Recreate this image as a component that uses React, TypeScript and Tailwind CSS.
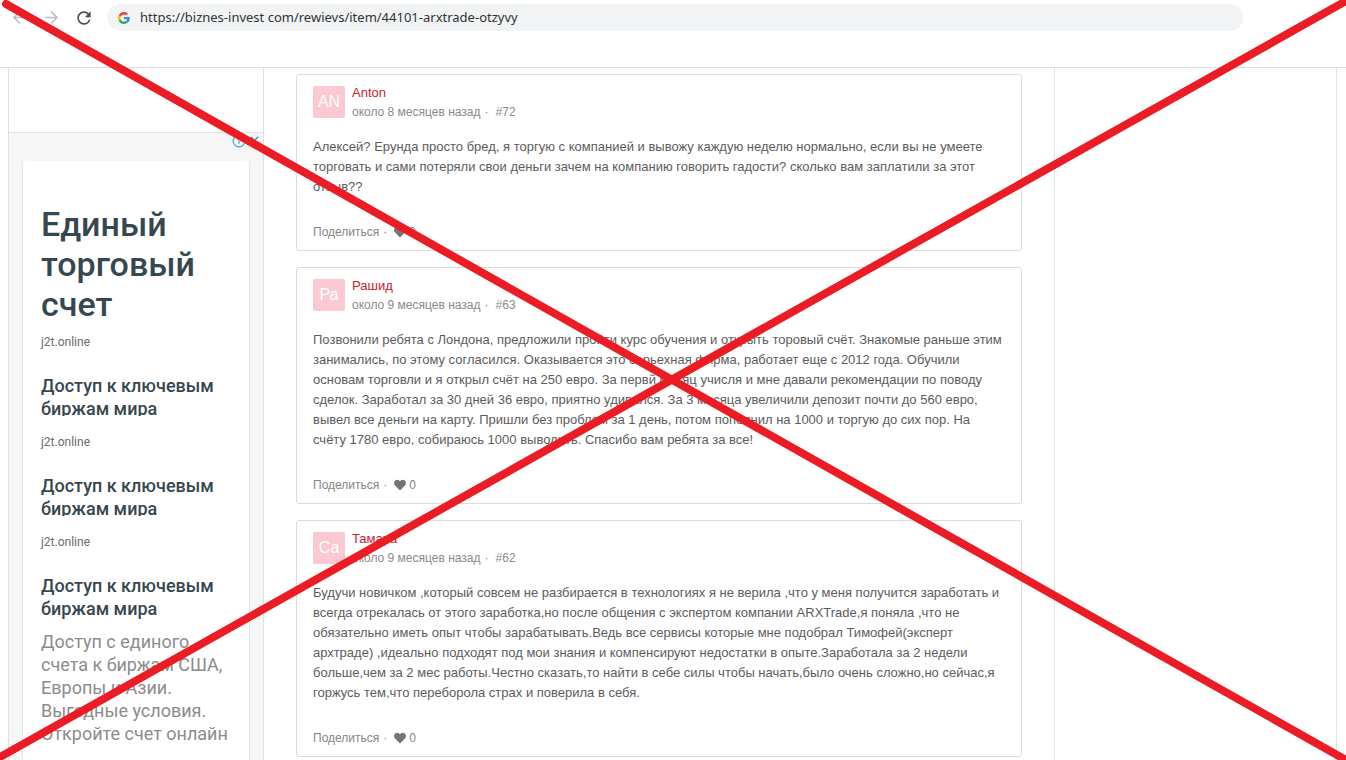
import { ArrowLeft, ArrowRight, Info, X } from 'lucide-react';
import { FaHeart } from 'react-icons/fa';
import { MdRefresh } from 'react-icons/md';

type Comment = {
  id: number;
  initials: string;
  author: string;
  date: string;
  likes: number;
  lines: string[];
};

const comments: Comment[] = [
  {
    id: 72,
    initials: 'AN',
    author: 'Anton',
    date: 'около 8 месяцев назад',
    likes: 0,
    lines: [
      'Алексей? Ерунда просто бред, я торгую с компанией и вывожу каждую неделю нормально, если вы не умеете',
      'торговать и сами потеряли свои деньги зачем на компанию говорить гадости? сколько вам заплатили за этот',
      'отзыв??',
    ],
  },
  {
    id: 63,
    initials: 'Ра',
    author: 'Рашид',
    date: 'около 9 месяцев назад',
    likes: 0,
    lines: [
      'Позвонили ребята с Лондона, предложили пройти курс обучения и открыть торовый счёт. Знакомые раньше этим',
      'занимались, по этому согласился. Оказывается это серьехная фирма, работает еще с 2012 года. Обучили',
      'основам торговли и я открыл счёт на 250 евро. За первй месяц учисля и мне давали рекомендации по поводу',
      'сделок. Заработал за 30 дней 36 евро, приятно удивился. За 3 месяца увеличили депозит почти до 560 евро,',
      'вывел все деньги на карту. Пришли без проблем за 1 день, потом пополнил на 1000 и торгую до сих пор. На',
      'счёту 1780 евро, собираюсь 1000 выводить. Спасибо вам ребята за все!',
    ],
  },
  {
    id: 62,
    initials: 'Са',
    author: 'Тамара',
    date: 'около 9 месяцев назад',
    likes: 0,
    lines: [
      'Будучи новичком ,который совсем не разбирается в технологиях я не верила ,что у меня получится заработать и',
      'всегда отрекалась от этого заработка,но после общения с экспертом компании ARXTrade,я поняла ,что не',
      'обязательно иметь опыт чтобы зарабатывать.Ведь все сервисы которые мне подобрал Тимофей(эксперт',
      'архтраде) ,идеально подходят под мои знания и компенсируют недостатки в опыте.Заработала за 2 недели',
      'больше,чем за 2 мес работы.Честно сказать,то найти в себе силы чтобы начать,было очень сложно,но сейчас,я',
      'горжусь тем,что переборола страх и поверила в себя.',
    ],
  },
];

function GoogleLogo() {
  return (
    <svg viewBox="0 0 48 48" className="size-3" aria-hidden="true">
      <path fill="#EA4335" d="M24 9.5c3.54 0 6.71 1.22 9.21 3.6l6.85-6.85C35.9 2.38 30.47 0 24 0 14.62 0 6.51 5.38 2.56 13.22l7.98 6.19C12.43 13.72 17.74 9.5 24 9.5z" />
      <path fill="#4285F4" d="M46.98 24.55c0-1.57-.15-3.09-.38-4.55H24v9.02h12.94c-.58 2.96-2.26 5.48-4.78 7.18l7.73 6c4.51-4.18 7.09-10.36 7.09-17.65z" />
      <path fill="#FBBC05" d="M10.53 28.59A14.5 14.5 0 0 1 9.77 24c0-1.6.27-3.14.76-4.59l-7.98-6.19A23.9 23.9 0 0 0 0 24c0 3.88.92 7.54 2.56 10.78l7.97-6.19z" />
      <path fill="#34A853" d="M24 48c6.48 0 11.93-2.13 15.89-5.81l-7.73-6c-2.15 1.45-4.92 2.3-8.16 2.3-6.26 0-11.57-4.22-13.47-9.91l-7.98 6.19C6.51 42.62 14.62 48 24 48z" />
    </svg>
  );
}

function Toolbar() {
  return (
    <header className="h-[68px] shrink-0 border-b border-[#dfe0e2] pt-1 pr-[103px] pl-2.5">
      <div className="flex h-[27px] items-center">
        <button type="button" aria-label="Назад" className="flex w-8 justify-start text-[#b9bbbe]">
          <ArrowLeft size={19} strokeWidth={2} />
        </button>
        <button type="button" aria-label="Вперёд" className="flex w-8 justify-start text-[#b9bbbe]">
          <ArrowRight size={19} strokeWidth={2} />
        </button>
        <button type="button" aria-label="Обновить" className="flex w-[33px] justify-start text-[#4a4d51]">
          <MdRefresh size={20} />
        </button>
        <label className="flex h-[27px] flex-1 items-center gap-2.5 rounded-full bg-[#f1f3f4] pl-[11px]">
          <GoogleLogo />
          <input
            type="text"
            aria-label="Адрес"
            defaultValue="https://biznes-invest com/rewievs/item/44101-arxtrade-otzyvy"
            className="flex-1 bg-transparent font-['Noto_Sans',sans-serif] text-[13px] text-[#303336] outline-none"
          />
        </label>
      </div>
    </header>
  );
}

function AdLink() {
  return (
    <a href="#ad" className="block text-[12px] leading-[19px] text-[#6b6b6b]">
      j2t.online
    </a>
  );
}

function AdTeaser() {
  return (
    <>
      <h3 className="mt-[22px] mb-[17px] h-[42px] overflow-hidden text-[18px] leading-[23px] font-medium">
        Доступ к ключевым
        <br />
        биржам мира
      </h3>
      <AdLink />
    </>
  );
}

function Sidebar() {
  return (
    <aside className="flex w-64 shrink-0 flex-col border-x border-[#e0e0e0] pt-16">
      <div className="relative flex-1 border-t border-[#e3e3e3] bg-[#f6f6f6] px-[13px] pt-7 font-['Roboto',sans-serif]">
        <div className="absolute top-px right-0.5 flex gap-0.5 text-[#3fa3c4]">
          <Info size={14} strokeWidth={2} />
          <X size={13} strokeWidth={3} />
        </div>
        <div className="h-full rounded-t-sm border-x border-[#e6e6e6] bg-white pt-[43px] pl-[18px] text-[#37474f]">
          <h2 className="mb-[9px] text-[34px] leading-10 font-medium">
            Единый
            <br />
            торговый
            <br />
            счет
          </h2>
          <AdLink />
          <AdTeaser />
          <AdTeaser />
          <h3 className="mt-[22px] text-[18px] leading-[23px] font-medium">
            Доступ к ключевым
            <br />
            биржам мира
          </h3>
          <p className="mt-2.5 text-[18px] leading-[23px] whitespace-nowrap text-[#8c8c8c]">
            Доступ с единого
            <br />
            счета к биржам США,
            <br />
            Европы и Азии.
            <br />
            Выгодные условия.
            <br />
            Откройте счет онлайн
          </p>
        </div>
      </div>
    </aside>
  );
}

function CommentCard({ comment }: { comment: Comment }) {
  return (
    <article className="shrink-0 rounded-[3px] border border-[#dcdcdc] px-4 pt-[11px] pb-2">
      <div className="flex gap-[7px]">
        <div className="flex size-8 items-center justify-center rounded-xs bg-[#fbc9d1] text-[16px] text-white">
          {comment.initials}
        </div>
        <div className="text-[12px] text-[#8a8a8a]">
          <a href="#author" className="block text-[13px] leading-[14px] whitespace-nowrap text-[#c8202f]">
            {comment.author}
          </a>
          <div className="mt-1 flex leading-4">
            <span>{comment.date}</span>
            <span className="w-[15px] pl-1">·</span>
            <a href="#comment">#{comment.id}</a>
          </div>
        </div>
      </div>
      <p className="mt-[17px] text-[13px] leading-5 whitespace-nowrap text-[#5c5c5c]">
        {comment.lines.map((line) => (
          <span key={line} className="block">
            {line}
          </span>
        ))}
      </p>
      <div className="mt-[25px] flex h-5 items-center text-[12px] text-[#858585]">
        <button type="button">Поделиться</button>
        <span className="w-[15px] pl-1">·</span>
        <button type="button" aria-label="Нравится" className="flex items-center gap-[3px]">
          <FaHeart size={12} className="text-[#757575]" />
          {comment.likes}
        </button>
      </div>
    </article>
  );
}

// Red strike-through laid over the whole window
function CrossOut() {
  return (
    <svg
      className="pointer-events-none absolute inset-0 size-full"
      viewBox="0 0 1346 760"
      preserveAspectRatio="none"
      aria-hidden="true"
    >
      <g stroke="#ec1c24" strokeWidth="8" strokeLinecap="round">
        <line x1="6" y1="4" x2="1346" y2="760" />
        <line x1="0" y1="757" x2="1346" y2="1" />
      </g>
    </svg>
  );
}

export default function App() {
  return (
    <div className="relative flex h-screen flex-col overflow-hidden bg-white font-['Liberation_Sans',Arial,sans-serif]">
      <Toolbar />
      <div className="flex min-h-0 flex-1 overflow-hidden pr-[9px] pl-2">
        <Sidebar />
        <main className="flex min-w-0 flex-1 flex-col gap-4 px-8 pt-1.5">
          {comments.map((comment) => (
            <CommentCard key={comment.id} comment={comment} />
          ))}
        </main>
        <div className="w-[283px] shrink-0 border-x border-[#e4e4e4]" />
      </div>
      <CrossOut />
    </div>
  );
}
